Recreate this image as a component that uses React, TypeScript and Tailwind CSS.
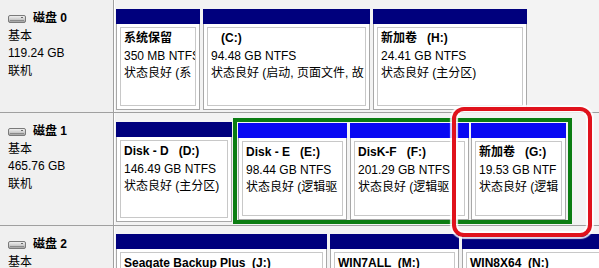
import React from 'react';

const FONT = { fontFamily: '"Liberation Sans", "Noto Sans CJK SC", sans-serif' };

type Part = {
  w: number;
  label: string;
  size: string;
  status: string;
  logical?: boolean;
};

const DiskIcon: React.FC = () => (
  <svg width="18" height="8" viewBox="0 0 18 8" className="shrink-0">
    <defs>
      <linearGradient id="dg" x1="0" y1="0" x2="0" y2="1">
        <stop offset="0" stopColor="#f4f4f4" />
        <stop offset="0.6" stopColor="#c8c8c8" />
        <stop offset="1" stopColor="#9a9a9a" />
      </linearGradient>
    </defs>
    <rect x="0.5" y="0.5" width="17" height="7" rx="1.5" fill="url(#dg)" stroke="#7a7a7a" />
    <rect x="2" y="5" width="14" height="1" fill="#8a8a8a" />
    <rect x="13" y="2" width="2" height="1" fill="#6a6a6a" />
  </svg>
);

const Partition: React.FC<Part & { h: string }> = ({ w, label, size, status, logical, h }) => (
  <div className={`flex flex-col shrink-0 ${h}`} style={{ width: w }}>
    <div className={`h-[15px] shrink-0 ${logical ? 'bg-[#0808f2]' : 'bg-[#00007d]'}`} />
    <div className="flex-1 min-h-0 bg-white border-x border-b border-[#a8a8a8] p-[3px]">
      <div className="h-full border border-[#c8c8c8] overflow-hidden whitespace-pre pl-[3px] pt-[2px] text-[12px] leading-[17.5px] text-black">
        <div className="font-bold">{label}</div>
        <div>{size}</div>
        <div>{status}</div>
      </div>
    </div>
  </div>
);

const LeftPanel: React.FC<{ name: string; cap: string }> = ({ name, cap }) => (
  <div className="w-[114px] shrink-0 bg-[#f0f0f0] border-r border-[#a0a0a0] pl-[8px] pt-[10px] text-[12px] leading-[17.5px] text-black">
    <div className="flex items-center gap-[7px]">
      <DiskIcon />
      <span className="font-bold">{name}</span>
    </div>
    <div>基本</div>
    <div>{cap}</div>
    <div>联机</div>
  </div>
);

const App: React.FC = () => {
  return (
    <div className="relative w-[599px] h-[268px] overflow-hidden bg-[#f3f3f3]" style={FONT}>
      {/* 磁盘 0 */}
      <div className="flex h-[113px] border-b border-[#a0a0a0]">
        <LeftPanel name="磁盘 0" cap="119.24 GB" />
        <div className="flex-1 flex items-start gap-[3px] pl-[1px] pt-[9px] border-l border-white">
          <Partition h="h-[101px]" w={84} label="系统保留" size="350 MB NTFS" status="状态良好 (系" />
          <Partition h="h-[101px]" w={167} label="   (C:)" size="94.48 GB NTFS" status="状态良好 (启动, 页面文件, 故" />
          <Partition h="h-[101px]" w={154} label="新加卷   (H:)" size="24.41 GB NTFS" status="状态良好 (主分区)" />
        </div>
      </div>

      {/* 磁盘 1 */}
      <div className="flex h-[113px] border-b border-[#a0a0a0]">
        <LeftPanel name="磁盘 1" cap="465.76 GB" />
        <div className="flex-1 flex items-start gap-[1px] pl-[1px] border-l border-white">
          <div className="pt-[9px]">
            <Partition h="h-[100px]" w={116} label="Disk - D   (D:)" size="146.49 GB NTFS" status="状态良好 (主分区)" />
          </div>
          <div className="mt-[5px] h-[106px] w-[339px] border-[4px] border-[#0b7d12] pt-[1px] pl-[1px] flex gap-[3px]">
            <Partition h="h-full" logical w={109} label="Disk - E   (E:)" size="98.44 GB NTFS" status="状态良好 (逻辑驱" />
            <Partition h="h-full" logical w={119} label="DisK-F   (F:)" size="201.29 GB NTFS" status="状态良好 (逻辑驱" />
            <div className="w-[95px] shrink-0 -ml-[1px] h-full flex">
              <Partition h="h-full" logical w={95} label="新加卷   (G:)" size="19.53 GB NTF" status="状态良好 (逻辑" />
            </div>
          </div>
        </div>
      </div>

      {/* 磁盘 2 */}
      <div className="flex h-[120px]">
        <LeftPanel name="磁盘 2" cap="931.51 GB" />
        <div className="flex-1 flex items-start gap-[3px] pl-[1px] pt-[8px] border-l border-white">
          <Partition h="h-[101px]" w={211} label="Seagate Backup Plus  (J:)" size="500.00 GB NTFS" status="状态良好 (主分区)" />
          <Partition h="h-[101px]" w={129} label="WIN7ALL  (M:)" size="200.00 GB NTFS" status="状态良好 (主分区)" />
          <Partition h="h-[101px]" w={150} label="WIN8X64  (N:)" size="231.51 GB NTFS" status="状态良好 (主分区)" />
        </div>
      </div>

      {/* red highlight */}
      <div className="absolute left-[452px] top-[107px] w-[140px] h-[130px] rounded-[12px] border-[4px] border-[#e0121c] shadow-[0_0_1px_2px_rgba(255,255,255,0.85),inset_0_0_1px_2px_rgba(255,255,255,0.85)] pointer-events-none" />
    </div>
  );
};

export default App;
